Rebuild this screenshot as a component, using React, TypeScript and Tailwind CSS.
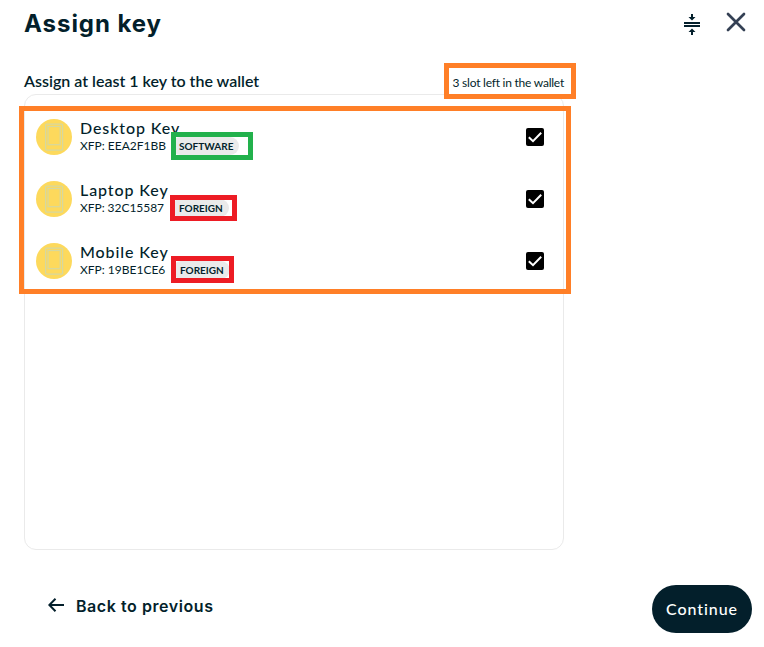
import React from "react";

type Key = { name: string; xfp: string; tag: string; pill: string; xfpClass: string };

const keys: Key[] = [
  { name: "Desktop Key", xfp: "EEA2F1BB", tag: "SOFTWARE", pill: "w-[68px]", xfpClass: "w-[91px]" },
  { name: "Laptop Key", xfp: "32C15587", tag: "FOREIGN", pill: "w-[58px]", xfpClass: "w-[91px] tracking-[-0.05px]" },
  { name: "Mobile Key", xfp: "19BE1CE6", tag: "FOREIGN", pill: "w-[58px]", xfpClass: "w-[92px]" },
];

function DeviceIcon() {
  return (
    <svg width="36" height="36" viewBox="0 0 36 36" className="shrink-0">
      <circle cx="18" cy="18" r="18" fill="#FDD95C" />
      <g fill="none" stroke="#D5D8A0" strokeWidth="1.2">
        <rect x="9.600" y="5.100" width="17" height="26" rx="1" />
        <rect x="12" y="7.500" width="12.200" height="18.200" />
      </g>
    </svg>
  );
}

function Checked() {
  return (
    <svg width="18" height="18" viewBox="0 0 18 18" className="shrink-0">
      <rect width="18" height="18" rx="2" fill="#000" />
      <path d="M2.800 9.200 7 13.200 15.200 4.800" fill="none" stroke="#fff" strokeWidth="2" />
    </svg>
  );
}

function KeyRow({ item }: { item: Key }) {
  return (
    <li className="flex h-[62px] items-start">
      <DeviceIcon />
      <div className="ml-2 flex-1">
        <div className="h-[18px] whitespace-nowrap text-base font-medium leading-[18px] tracking-[0.9px]">{item.name}</div>
        <div className="flex h-[18px] items-center">
          <span className={`whitespace-nowrap text-xs leading-[18px] ${item.xfpClass}`}>XFP: {item.xfp}</span>
          <span className={`h-[18px] rounded-full bg-[#eaeaea] pl-2 text-[10px] font-bold leading-[18px] ${item.pill}`}>
            {item.tag}
          </span>
        </div>
      </div>
      <div className="mt-[9px]">
        <Checked />
      </div>
    </li>
  );
}

export default function App() {
  return (
    <main className="relative flex h-[647px] w-[764px] flex-col overflow-hidden bg-white font-['Lato',sans-serif] text-[#031f2b]">
      <header className="flex h-[70px] items-start justify-between pl-6 pr-[18px]">
        <h1 className="mt-2 font-['Inter',sans-serif] text-2xl font-bold leading-8 tracking-[0.95px]">Assign key</h1>
        <div className="mt-[12px] flex gap-[25px]">
          <svg width="18" height="24" viewBox="0 0 18 24" className="mt-px" fill="#031f2b">
            <path d="M1 9h16v2H1zM1 12h16v2H1zM8 1h2v3h2.500L9 7.500 5.500 4H8zM8 22h2v-3h2.500L9 15.500 5.500 19H8z" />
          </svg>
          <svg width="20" height="20" viewBox="0 0 20 20" fill="none" stroke="#344054" strokeWidth="2.7" strokeLinecap="round">
            <path d="M2 2 18 18M18 2 2 18" />
          </svg>
        </div>
      </header>

      <div className="flex h-6 w-[564px] items-center justify-between pl-6">
        <h2 className="-mt-0.5 text-base font-semibold leading-6">Assign at least 1 key to the wallet</h2>
        <span className="mt-0.5 text-xs leading-6 tracking-[-0.23px]">3 slot left in the wallet</span>
      </div>

      <section className="ml-6 h-[456px] w-[540px] rounded-xl border border-[#eaeaea]">
        <ul className="pl-[11px] pr-[19px] pt-6">
          {keys.map((item) => (
            <KeyRow key={item.name} item={item} />
          ))}
        </ul>
      </section>

      <footer className="mt-[35px] flex h-12 items-start justify-between pl-12 pr-3">
        <button className="mt-[9px] flex items-center gap-3">
          <svg width="16" height="14" viewBox="0 0 16 14" fill="none" stroke="#031f2b" strokeWidth="2" className="-mt-0.5">
            <path d="M16 7H1.500M7.500 .8 1.300 7l6.200 6.200" />
          </svg>
          <span className="font-['Inter',sans-serif] text-base font-semibold leading-6 tracking-[0.56px]">Back to previous</span>
        </button>
        <button className="h-12 w-[100px] rounded-full bg-[#031f2b] text-base font-medium tracking-[0.95px] text-white">Continue</button>
      </footer>

      <div className="absolute left-[19px] top-[106px] h-[188px] w-[552px] border-[5px] border-[#ff7f27]" />
      <div className="absolute left-[444px] top-[63px] h-[36px] w-[132px] border-[5px] border-[#ff7f27]" />
      <div className="absolute left-[171px] top-[132px] h-[28px] w-[82px] border-[5px] border-[#22b14c]" />
      <div className="absolute left-[170px] top-[195px] h-[26px] w-[67px] border-[5px] border-[#ed1c24]" />
      <div className="absolute left-[171px] top-[256px] h-[27px] w-[63px] border-[5px] border-[#ed1c24]" />
    </main>
  );
}
